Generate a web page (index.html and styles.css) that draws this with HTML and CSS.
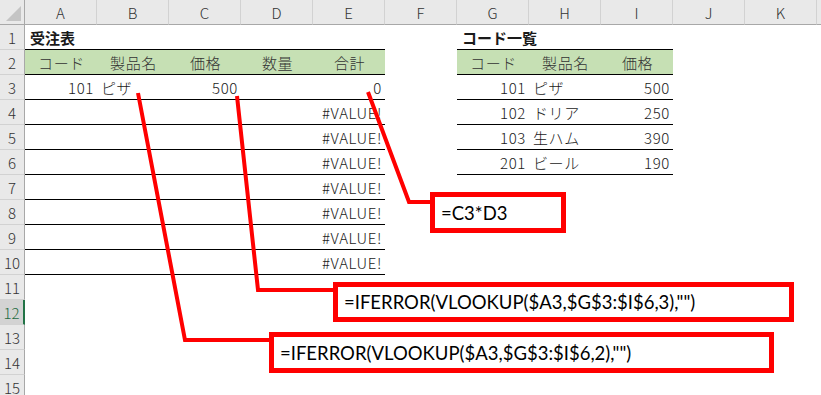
FILE: index.html
```html
<!DOCTYPE html>
<html lang="ja">
<head>
<meta charset="utf-8">
<link rel="stylesheet" href="styles.css">
</head>
<body>
<div class="sheet">
  <div class="corner"><span class="tri"></span></div>
  <div class="ch">A</div><div class="ch">B</div><div class="ch">C</div><div class="ch">D</div><div class="ch">E</div><div class="ch">F</div><div class="ch">G</div><div class="ch">H</div><div class="ch">I</div><div class="ch">J</div><div class="ch">K</div><div class="ch end"></div>

  <div class="rh">1</div>
  <div class="c b bold">受注表</div><div class="c b"></div><div class="c b"></div><div class="c b"></div><div class="c b"></div>
  <div class="c"></div>
  <div class="c b bold">コード一覧</div><div class="c b"></div><div class="c b"></div>
  <div class="c"></div><div class="c"></div><div class="c"></div>

  <div class="rh">2</div>
  <div class="c b g m">コード</div><div class="c b g m">製品名</div><div class="c b g m">価格</div><div class="c b g m">数量</div><div class="c b g m">合計</div>
  <div class="c"></div>
  <div class="c b g m">コード</div><div class="c b g m">製品名</div><div class="c b g m">価格</div>
  <div class="c"></div><div class="c"></div><div class="c"></div>

  <div class="rh">3</div>
  <div class="c b r">101</div><div class="c b">ピザ</div><div class="c b r">500</div><div class="c b"></div><div class="c b r">0</div>
  <div class="c"></div>
  <div class="c b r">101</div><div class="c b">ピザ</div><div class="c b r">500</div>
  <div class="c"></div><div class="c"></div><div class="c"></div>

  <div class="rh">4</div>
  <div class="c b"></div><div class="c b"></div><div class="c b"></div><div class="c b"></div><div class="c b r">#VALUE!</div>
  <div class="c"></div>
  <div class="c b r">102</div><div class="c b">ドリア</div><div class="c b r">250</div>
  <div class="c"></div><div class="c"></div><div class="c"></div>

  <div class="rh">5</div>
  <div class="c b"></div><div class="c b"></div><div class="c b"></div><div class="c b"></div><div class="c b r">#VALUE!</div>
  <div class="c"></div>
  <div class="c b r">103</div><div class="c b">生ハム</div><div class="c b r">390</div>
  <div class="c"></div><div class="c"></div><div class="c"></div>

  <div class="rh">6</div>
  <div class="c b"></div><div class="c b"></div><div class="c b"></div><div class="c b"></div><div class="c b r">#VALUE!</div>
  <div class="c"></div>
  <div class="c b r">201</div><div class="c b">ビール</div><div class="c b r">190</div>
  <div class="c"></div><div class="c"></div><div class="c"></div>

  <div class="rh">7</div>
  <div class="c b"></div><div class="c b"></div><div class="c b"></div><div class="c b"></div><div class="c b r">#VALUE!</div>
  <div class="c"></div><div class="c"></div><div class="c"></div><div class="c"></div><div class="c"></div><div class="c"></div><div class="c"></div>

  <div class="rh">8</div>
  <div class="c b"></div><div class="c b"></div><div class="c b"></div><div class="c b"></div><div class="c b r">#VALUE!</div>
  <div class="c"></div><div class="c"></div><div class="c"></div><div class="c"></div><div class="c"></div><div class="c"></div><div class="c"></div>

  <div class="rh">9</div>
  <div class="c b"></div><div class="c b"></div><div class="c b"></div><div class="c b"></div><div class="c b r">#VALUE!</div>
  <div class="c"></div><div class="c"></div><div class="c"></div><div class="c"></div><div class="c"></div><div class="c"></div><div class="c"></div>

  <div class="rh">10</div>
  <div class="c b"></div><div class="c b"></div><div class="c b"></div><div class="c b"></div><div class="c b r">#VALUE!</div>
  <div class="c"></div><div class="c"></div><div class="c"></div><div class="c"></div><div class="c"></div><div class="c"></div><div class="c"></div>

  <div class="rh">11</div>
  <div class="c"></div><div class="c"></div><div class="c"></div><div class="c"></div><div class="c"></div><div class="c"></div><div class="c"></div><div class="c"></div><div class="c"></div><div class="c"></div><div class="c"></div><div class="c"></div>

  <div class="rh sel">12</div>
  <div class="c"></div><div class="c"></div><div class="c"></div><div class="c"></div><div class="c"></div><div class="c"></div><div class="c"></div><div class="c"></div><div class="c"></div><div class="c"></div><div class="c"></div><div class="c"></div>

  <div class="rh">13</div>
  <div class="c"></div><div class="c"></div><div class="c"></div><div class="c"></div><div class="c"></div><div class="c"></div><div class="c"></div><div class="c"></div><div class="c"></div><div class="c"></div><div class="c"></div><div class="c"></div>

  <div class="rh">14</div>
  <div class="c"></div><div class="c"></div><div class="c"></div><div class="c"></div><div class="c"></div><div class="c"></div><div class="c"></div><div class="c"></div><div class="c"></div><div class="c"></div><div class="c"></div><div class="c"></div>

  <div class="rh">15</div>
  <div class="c"></div><div class="c"></div><div class="c"></div><div class="c"></div><div class="c"></div><div class="c"></div><div class="c"></div><div class="c"></div><div class="c"></div><div class="c"></div><div class="c"></div><div class="c"></div>
</div>

<svg class="leaders" width="821" height="395" viewBox="0 0 821 395" xmlns="http://www.w3.org/2000/svg">
  <polyline points="138,93 185,340 272,340" />
  <polyline points="237,96 258,290 336,290" />
  <polyline points="368,92 409,202 433,202" />
</svg>

<div class="callout co1">=C3*D3</div>
<div class="callout co2">=IFERROR(VLOOKUP($A3,$G$3:$I$6,3),"")</div>
<div class="callout co3">=IFERROR(VLOOKUP($A3,$G$3:$I$6,2),"")</div>
</body>
</html>
```

FILE: styles.css
```css
html, body {
  margin: 0;
  padding: 0;
  background: #ffffff;
}

body {
  position: relative;
  width: 821px;
  height: 395px;
  overflow: hidden;
  font-family: "Noto Sans CJK JP", "Noto Sans", sans-serif;
}

.sheet {
  display: grid;
  grid-template-columns: 25px repeat(11, 72px) 4px;
  grid-auto-rows: 25px;
  font-size: 15px;
  font-weight: 300;
  letter-spacing: 0.6px;
  color: #1a1a1a;
}

.sheet > div {
  box-sizing: border-box;
  display: flex;
  align-items: center;
  white-space: nowrap;
  line-height: 1;
  overflow: visible;
}

.corner {
  position: relative;
  background: #e9e9e9;
  border-right: 1px solid #a8a8a8;
  border-bottom: 1px solid #a8a8a8;
}

.tri {
  position: absolute;
  right: 3px;
  bottom: 3px;
  width: 0;
  height: 0;
  border-left: 15px solid transparent;
  border-bottom: 15px solid #c4c4c4;
}

.ch {
  justify-content: center;
  background: #e9e9e9;
  color: #333;
  border-right: 1px solid #d2d2d2;
  border-bottom: 1px solid #a8a8a8;
  font-size: 15px;
  letter-spacing: 0;
}

.ch.end {
  border-right: none;
}

.rh {
  justify-content: center;
  background: #e9e9e9;
  color: #333;
  border-right: 1px solid #a8a8a8;
  border-bottom: 1px solid #d2d2d2;
  font-size: 15px;
  letter-spacing: 0;
  padding-top: 1px;
}

.rh.sel {
  background: #d3d3d3;
  color: #1e6b41;
  border-right: 2px solid #217346;
}

.c {
  padding: 0 3px 0 4px;
  border-bottom: 1px solid transparent;
}

.b {
  border-bottom: 1px solid #000;
}

.g {
  background: #c6e0b4;
  color: #333;
}

.m {
  justify-content: center;
}

.r {
  justify-content: flex-end;
}

.bold {
  font-weight: 700;
  padding-left: 5px;
  letter-spacing: 0;
}

.leaders {
  position: absolute;
  left: 0;
  top: 0;
  pointer-events: none;
}

.leaders polyline {
  fill: none;
  stroke: #ff0000;
  stroke-width: 4;
  stroke-linejoin: miter;
}

.callout {
  position: absolute;
  box-sizing: border-box;
  display: flex;
  align-items: center;
  padding-left: 6px;
  background: #ffffff;
  border: 5px solid #ff0000;
  font-family: Lato, "Open Sans", sans-serif;
  font-size: 18.5px;
  color: #000;
  white-space: nowrap;
}

.co1 {
  left: 430px;
  top: 192px;
  width: 136px;
  height: 41px;
}

.co2 {
  left: 333px;
  top: 282px;
  width: 461px;
  height: 40px;
}

.co3 {
  left: 269px;
  top: 332px;
  width: 505px;
  height: 41px;
}
```
